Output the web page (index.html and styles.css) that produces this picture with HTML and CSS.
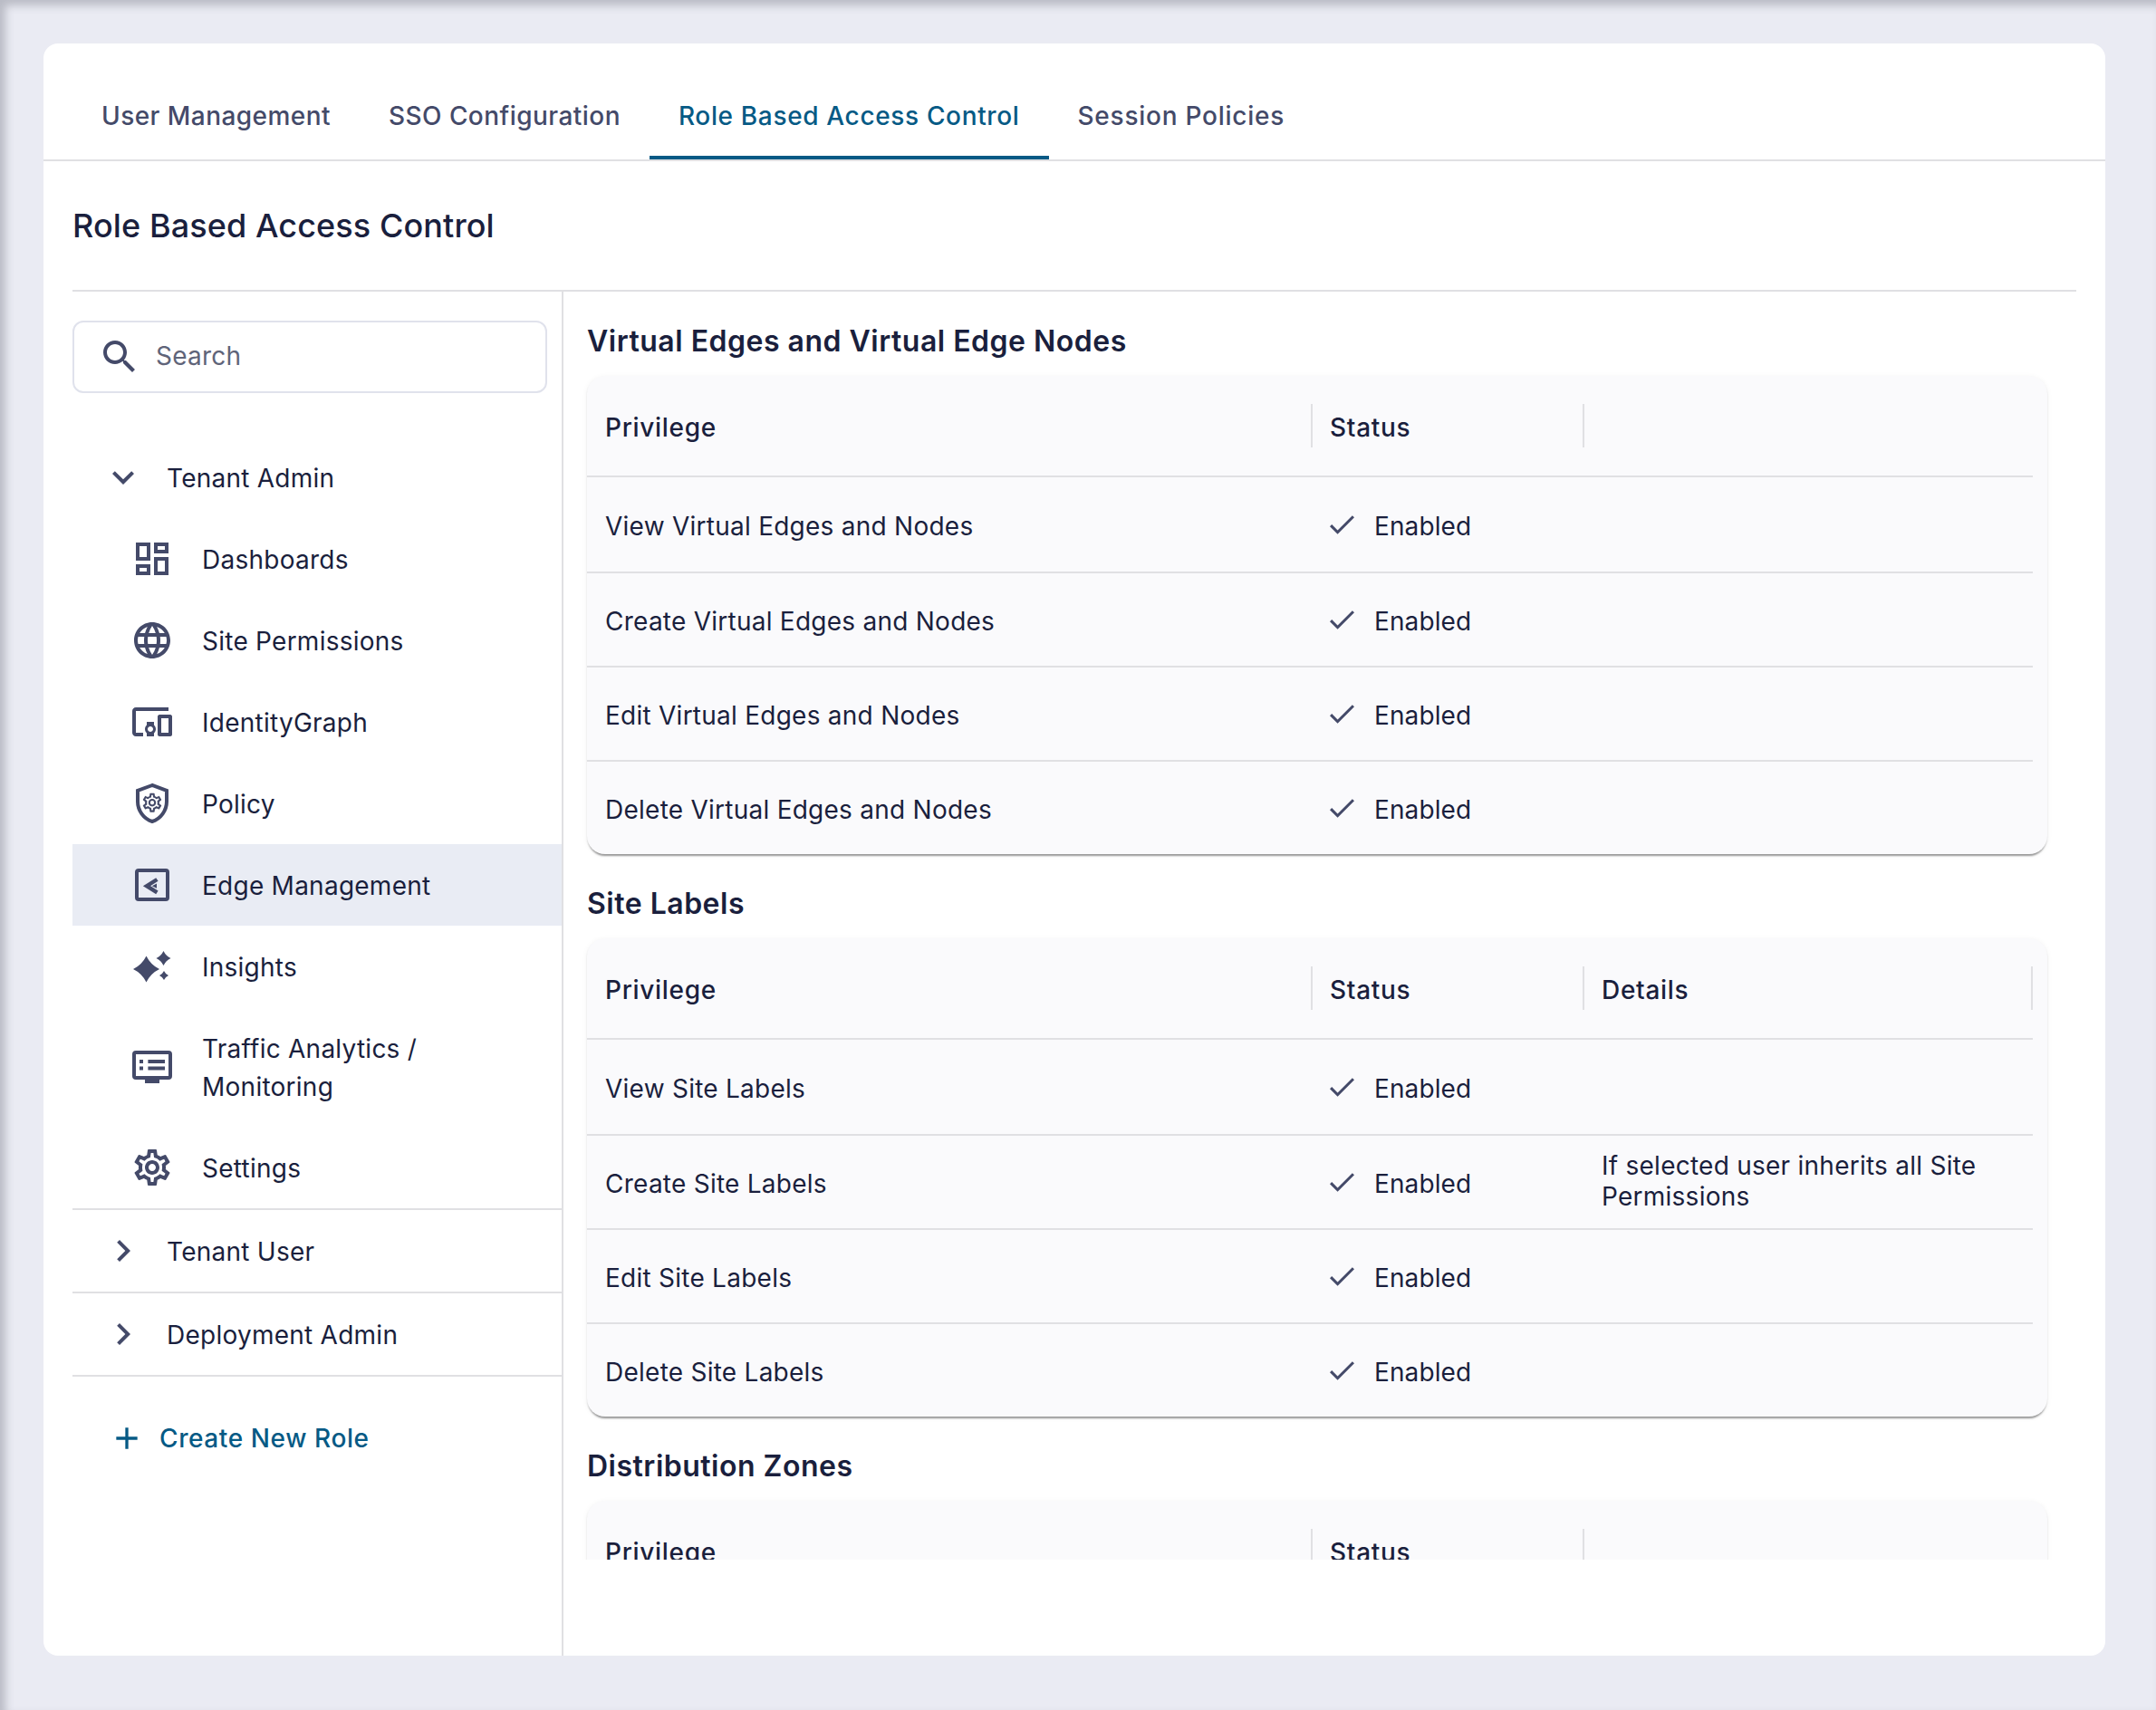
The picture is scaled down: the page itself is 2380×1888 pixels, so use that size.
FILE: index.html
```html
<!doctype html>
<html lang="en">
  <head>
    <meta charset="UTF-8" />
    <meta name="viewport" content="width=device-width, initial-scale=1.0" />
    <title>Role Based Access Control</title>
    <link rel="stylesheet" href="styles.css">
  </head>
  <body>
    <svg class="icon_defs" width="0" height="0">
      <defs>
        <path id="gear" d="M19.43 12.98c.04-.32.07-.64.07-.98 0-.34-.03-.66-.07-.98l2.11-1.65c.19-.15.24-.42.12-.64l-2-3.46c-.09-.16-.26-.25-.44-.25-.06 0-.12.01-.17.03l-2.49 1c-.52-.4-1.08-.73-1.69-.98l-.38-2.65C14.46 2.18 14.25 2 14 2h-4c-.25 0-.46.18-.49.42l-.38 2.65c-.61.25-1.17.59-1.69.98l-2.49-1c-.06-.02-.12-.03-.18-.03-.17 0-.34.09-.43.25l-2 3.46c-.13.22-.07.49.12.64l2.11 1.65c-.04.32-.07.65-.07.98 0 .33.03.66.07.98l-2.11 1.65c-.19.15-.24.42-.12.64l2 3.46c.09.16.26.25.44.25.06 0 .12-.01.17-.03l2.49-1c.52.4 1.08.73 1.69.98l.38 2.65c.03.24.24.42.49.42h4c.25 0 .46-.18.49-.42l.38-2.65c.61-.25 1.17-.59 1.69-.98l2.49 1c.06.02.12.03.18.03.17 0 .34-.09.43-.25l2-3.46c.12-.22.07-.49-.12-.64l-2.11-1.65zm-1.98-1.71c.04.31.05.52.05.73 0 .21-.02.43-.05.73l-.14 1.13.89.7 1.08.84-.7 1.21-1.27-.51-1.04-.42-.9.68c-.43.32-.84.56-1.25.73l-1.06.43-.16 1.13-.2 1.35h-1.4l-.19-1.35-.16-1.13-1.06-.43c-.43-.18-.83-.41-1.23-.71l-.91-.7-1.06.43-1.27.51-.7-1.21 1.08-.84.89-.7-.14-1.13c-.03-.31-.05-.54-.05-.74s.02-.43.05-.73l.14-1.13-.89-.7-1.08-.84.7-1.21 1.27.51 1.04.42.9-.68c.43-.32.84-.56 1.25-.73l1.06-.43.16-1.13.2-1.35h1.39l.19 1.35.16 1.13 1.06.43c.43.18.83.41 1.23.71l.91.7 1.06-.43 1.27-.51.7 1.21-1.07.85-.89.7.14 1.13zM12 8c-2.21 0-4 1.79-4 4s1.79 4 4 4 4-1.79 4-4-1.79-4-4-4zm0 6c-1.1 0-2-.9-2-2s.9-2 2-2 2 .9 2 2-.9 2-2 2z" />
        <path id="check" d="M9 16.17 4.83 12l-1.42 1.41L9 19 21 7l-1.41-1.41z" />
        <path id="chevron_right" d="M10 6 8.59 7.41 13.17 12l-4.58 4.59L10 18l6-6z" />
      </defs>
    </svg>

    <div class="card">
      <!-- tabs -->
      <div class="tabs_row">
        <div class="tab_item">User Management</div>
        <div class="tab_item">SSO Configuration</div>
        <div class="tab_item tab_active">Role Based Access Control</div>
        <div class="tab_item">Session Policies</div>
      </div>

      <div class="card_body">
        <h1 class="page_title">Role Based Access Control</h1>

        <div class="split_row">
          <!-- left tree -->
          <aside class="side_panel">
            <div class="search_box">
              <svg class="icon_48" viewBox="0 0 24 24"><path d="M15.5 14h-.79l-.28-.27C15.41 12.59 16 11.11 16 9.5 16 5.91 13.09 3 9.5 3S3 5.91 3 9.5 5.91 16 9.5 16c1.61 0 3.09-.59 4.23-1.57l.27.28v.79l5 4.99L20.49 19l-4.99-5zm-6 0C7.01 14 5 11.99 5 9.5S7.01 5 9.5 5 14 7.01 14 9.5 11.99 14 9.5 14z" /></svg>
              <span>Search</span>
            </div>

            <div class="tree_group">
              <div class="group_head">
                <svg class="icon_48" viewBox="0 0 24 24"><path d="M16.59 8.59 12 13.17 7.41 8.59 6 10l6 6 6-6z" /></svg>
                <span>Tenant Admin</span>
              </div>
              <div class="tree_item">
                <svg class="icon_48" viewBox="0 0 24 24"><path d="M19 5v2h-4V5h4M9 5v6H5V5h4m10 8v6h-4v-6h4M9 17v2H5v-2h4M21 3h-8v6h8V3zM11 3H3v10h8V3zm10 8h-8v10h8V11zm-10 4H3v6h8v-6z" /></svg>
                <span>Dashboards</span>
              </div>
              <div class="tree_item">
                <svg class="icon_48" viewBox="0 0 24 24"><path d="M11.99 2C6.47 2 2 6.48 2 12s4.47 10 9.99 10C17.52 22 22 17.52 22 12S17.52 2 11.99 2zm6.93 6h-2.95c-.32-1.25-.78-2.45-1.38-3.56 1.84.63 3.37 1.91 4.33 3.56zM12 4.04c.83 1.2 1.48 2.53 1.91 3.96h-3.82c.43-1.43 1.08-2.76 1.91-3.96zM4.26 14C4.1 13.36 4 12.69 4 12s.1-1.36.26-2h3.38c-.08.66-.14 1.32-.14 2 0 .68.06 1.34.14 2H4.26zm.82 2h2.95c.32 1.25.78 2.45 1.38 3.56-1.84-.63-3.37-1.9-4.33-3.56zm2.95-8H5.08c.96-1.66 2.49-2.93 4.33-3.56C8.81 5.55 8.35 6.75 8.03 8zM12 19.96c-.83-1.2-1.48-2.53-1.91-3.96h3.82c-.43 1.43-1.08 2.76-1.91 3.96zM14.34 14H9.66c-.09-.66-.16-1.32-.16-2 0-.68.07-1.35.16-2h4.68c.09.65.16 1.32.16 2 0 .68-.07 1.34-.16 2zm.25 5.56c.6-1.11 1.06-2.31 1.38-3.56h2.95c-.96 1.65-2.49 2.93-4.33 3.56zM16.36 14c.08-.66.14-1.32.14-2 0-.68-.06-1.34-.14-2h3.38c.16.64.26 1.31.26 2s-.1 1.36-.26 2h-3.38z" /></svg>
                <span>Site Permissions</span>
              </div>
              <div class="tree_item">
                <svg class="icon_48" viewBox="0 0 24 24"><path d="M3 6h18V4H3c-1.1 0-2 .9-2 2v12c0 1.1.9 2 2 2h4v-2H3V6zm10 6H9v1.78c-.61.55-1 1.33-1 2.22s.39 1.67 1 2.22V20h4v-1.78c.61-.55 1-1.34 1-2.22s-.39-1.67-1-2.22V12zm-2 5.5c-.83 0-1.5-.67-1.5-1.5s.67-1.5 1.5-1.5 1.5.67 1.5 1.5-.67 1.5-1.5 1.5zM22 8h-6c-.5 0-1 .5-1 1v10c0 .5.5 1 1 1h6c.5 0 1-.5 1-1V9c0-.5-.5-1-1-1zm-1 10h-4v-8h4v8z" /></svg>
                <span>IdentityGraph</span>
              </div>
              <div class="tree_item">
                <svg class="icon_48" viewBox="0 0 24 24">
                  <path class="icon_line" d="M12 2 4 5v6c0 4.9 3.3 9.6 8 11 4.700-1.400 8-6.100 8-11V5z" />
                  <use href="#gear" transform="translate(5.700 5.300) scale(.525)" />
                </svg>
                <span>Policy</span>
              </div>
              <div class="tree_item tree_item_active">
                <svg class="icon_48" viewBox="0 0 24 24">
                  <rect class="icon_line" x="3.500" y="4" width="17" height="16" rx="1" />
                  <path class="icon_line icon_thick" d="M14.700 9 9 12.600l5.700 3.600" />
                  <path d="M14.500 11.300v2.600l-2.600-1.300z" />
                </svg>
                <span>Edge Management</span>
              </div>
              <div class="tree_item">
                <svg class="icon_48" viewBox="0 0 24 24">
                  <path d="M8.750 6.250q2.400 4.900 7.250 7.250-4.850 2.350-7.250 7.250-2.400-4.900-7.250-7.250 4.850-2.350 7.250-7.250z" />
                  <path d="M18.250 3.500q1.300 2.700 4 4-2.700 1.300-4 4-1.300-2.700-4-4 2.700-1.300 4-4z" />
                  <path d="M18.500 14.500q.8 1.700 2.500 2.500-1.700.8-2.500 2.500-.8-1.700-2.500-2.500 1.700-.8 2.500-2.500z" />
                </svg>
                <span>Insights</span>
              </div>
              <div class="tree_item tree_item_tall">
                <svg class="icon_48" viewBox="0 0 24 24">
                  <rect class="icon_line" x="2" y="4" width="20" height="14" rx="1" />
                  <path d="M8 19h8v2H8zM5 8h2v2H5zM9.700 8H19v2H9.700zM5 11.800h2v2H5zM9.700 11.800H19v2H9.700z" />
                </svg>
                <span>Traffic Analytics /<br />Monitoring</span>
              </div>
              <div class="tree_item">
                <svg class="icon_48" viewBox="0 0 24 24"><use href="#gear" /></svg>
                <span>Settings</span>
              </div>
            </div>

            <div class="group_head group_closed">
              <svg class="icon_48" viewBox="0 0 24 24"><use href="#chevron_right" /></svg>
              <span>Tenant User</span>
            </div>
            <div class="group_head group_closed">
              <svg class="icon_48" viewBox="0 0 24 24"><use href="#chevron_right" /></svg>
              <span>Deployment Admin</span>
            </div>

            <div class="create_role">
              <svg class="icon_40" viewBox="0 0 24 24"><path d="M19 13h-6v6h-2v-6H5v-2h6V5h2v6h6v2z" /></svg>
              <span>Create New Role</span>
            </div>
          </aside>

          <!-- privileges, cut off by the scroll area -->
          <main class="main_panel">
            <div class="scroll_area">
              <h2 class="section_title">Virtual Edges and Virtual Edge Nodes</h2>
              <div class="table_paper">
                <table class="priv_table">
                  <thead>
                    <tr><th><span class="th_cell">Privilege</span></th><th><span class="th_cell">Status</span></th><th><span class="th_cell th_plain"></span></th></tr>
                  </thead>
                  <tbody>
                    <tr><td>View Virtual Edges and Nodes</td><td><span class="status_cell"><svg class="check_icon" viewBox="3.410 5.590 17.590 13.410"><use href="#check" /></svg>Enabled</span></td><td></td></tr>
                    <tr><td>Create Virtual Edges and Nodes</td><td><span class="status_cell"><svg class="check_icon" viewBox="3.410 5.590 17.590 13.410"><use href="#check" /></svg>Enabled</span></td><td></td></tr>
                    <tr><td>Edit Virtual Edges and Nodes</td><td><span class="status_cell"><svg class="check_icon" viewBox="3.410 5.590 17.590 13.410"><use href="#check" /></svg>Enabled</span></td><td></td></tr>
                    <tr><td>Delete Virtual Edges and Nodes</td><td><span class="status_cell"><svg class="check_icon" viewBox="3.410 5.590 17.590 13.410"><use href="#check" /></svg>Enabled</span></td><td></td></tr>
                  </tbody>
                </table>
              </div>

              <h2 class="section_title">Site Labels</h2>
              <div class="table_paper">
                <table class="priv_table">
                  <thead>
                    <tr><th><span class="th_cell">Privilege</span></th><th><span class="th_cell">Status</span></th><th><span class="th_cell th_last">Details</span></th></tr>
                  </thead>
                  <tbody>
                    <tr><td>View Site Labels</td><td><span class="status_cell"><svg class="check_icon" viewBox="3.410 5.590 17.590 13.410"><use href="#check" /></svg>Enabled</span></td><td></td></tr>
                    <tr><td>Create Site Labels</td><td><span class="status_cell"><svg class="check_icon" viewBox="3.410 5.590 17.590 13.410"><use href="#check" /></svg>Enabled</span></td><td class="details_cell">If selected user inherits all Site Permissions</td></tr>
                    <tr><td>Edit Site Labels</td><td><span class="status_cell"><svg class="check_icon" viewBox="3.410 5.590 17.590 13.410"><use href="#check" /></svg>Enabled</span></td><td></td></tr>
                    <tr><td>Delete Site Labels</td><td><span class="status_cell"><svg class="check_icon" viewBox="3.410 5.590 17.590 13.410"><use href="#check" /></svg>Enabled</span></td><td></td></tr>
                  </tbody>
                </table>
              </div>

              <h2 class="section_title">Distribution Zones</h2>
              <div class="table_paper">
                <table class="priv_table">
                  <thead>
                    <tr><th><span class="th_cell">Privilege</span></th><th><span class="th_cell">Status</span></th><th><span class="th_cell th_plain"></span></th></tr>
                  </thead>
                </table>
              </div>
            </div>
          </main>
        </div>
      </div>
    </div>
  </body>
</html>
```

FILE: styles.css
```css
:root {
  --text-dark: #1a1f3d;
  --text-muted: #444a69;
  --blue: #065a85;
  --line: #e0e0e3;
}

html,
body {
  margin: 0;
  height: 100%;
}
body {
  height: 1888px;
  box-sizing: border-box;
  padding: 48px 56px 60px 48px;
  overflow: hidden;
  background-color: #eaebf3;
  box-shadow: inset 6px 6px 10px rgba(60, 64, 80, 0.28);
  font-family: "Inter", sans-serif;
  font-size: 28px;
  letter-spacing: 0.25px;
  color: var(--text-dark);
}

.icon_defs {
  position: absolute;
}
svg {
  fill: var(--text-muted);
  flex: none;
}
.icon_48 {
  width: 48px;
  height: 48px;
}
.icon_40 {
  width: 40px;
  height: 40px;
  fill: var(--blue);
}
.icon_line {
  fill: none;
  stroke: var(--text-muted);
  stroke-width: 2;
}
.icon_thick {
  stroke-width: 2.2;
}

.card {
  height: 100%;
  display: flex;
  flex-direction: column;
  background-color: #fff;
  border-radius: 16px;
  overflow: hidden;
}

/* TABS */
.tabs_row {
  display: flex;
  height: 130px;
  box-sizing: border-box;
  padding-left: 32px;
  border-bottom: 2px solid var(--line);
  flex: none;
}
.tab_item {
  padding: 63px 32px 0;
  height: 124px;
  box-sizing: border-box;
  color: var(--text-muted);
  font-weight: 500;
  letter-spacing: 0.45px;
}
.tab_item:last-child {
  letter-spacing: 0.75px;
}
.tab_active {
  height: 128px;
  color: var(--blue);
  letter-spacing: 0.65px;
  border-bottom: 4px solid var(--blue);
}

.card_body {
  flex: 1;
  min-height: 0;
  display: flex;
  flex-direction: column;
  padding: 0 32px;
}
.page_title {
  margin: 0;
  height: 142px;
  line-height: 142px;
  flex: none;
  border-bottom: 2px solid var(--line);
  box-sizing: content-box;
  font-size: 36px;
  font-weight: 500;
  letter-spacing: 0.1px;
}

.split_row {
  flex: 1;
  min-height: 0;
  display: flex;
}

/* LEFT TREE */
.side_panel {
  width: 542px;
  box-sizing: border-box;
  border-right: 2px solid var(--line);
  flex: none;
}
.search_box {
  display: flex;
  align-items: center;
  gap: 16px;
  width: 524px;
  height: 80px;
  margin-top: 32px;
  padding-left: 26px;
  box-sizing: border-box;
  border: 2px solid #e0e2ec;
  border-radius: 12px;
  color: #5f6479;
}
.search_box span {
  padding-bottom: 3px;
}
.tree_group {
  margin-top: 48px;
  border-bottom: 2px solid var(--line);
}
.group_head {
  display: flex;
  align-items: center;
  gap: 24px;
  height: 90px;
  padding-left: 32px;
}
.group_head span,
.tree_item span {
  padding-top: 2px;
  letter-spacing: 0.25px;
}
.group_closed {
  height: 90px;
  border-bottom: 2px solid var(--line);
}
.tree_item {
  display: flex;
  align-items: center;
  gap: 31px;
  height: 90px;
  padding-left: 64px;
  line-height: 42px;
}
.tree_item_tall {
  height: 132px;
}
.tree_item_active {
  background-color: #e9ecf4;
}
.create_role {
  display: flex;
  align-items: center;
  gap: 16px;
  margin-top: 48px;
  padding-left: 40px;
  color: var(--blue);
  font-weight: 500;
  letter-spacing: 0.6px;
}

/* PRIVILEGES */
.main_panel {
  flex: 1;
  min-width: 0;
}
.scroll_area {
  height: 1400px;
  overflow: hidden;
  padding-left: 26px;
  padding-right: 32px;
}
.section_title {
  margin: 0;
  height: 93px;
  line-height: 70px;
  padding-top: 20px;
  box-sizing: border-box;
  font-size: 32px;
  font-weight: 600;
  letter-spacing: 0.5px;
}
.table_paper {
  padding-right: 16px;
  background-color: #fafafc;
  border-radius: 20px;
  box-shadow: 0 4px 2px -2px rgba(0, 0, 0, 0.3), 0 2px 2px rgba(0, 0, 0, 0.12), 0 1px 6px rgba(0, 0, 0, 0.05);
}
.priv_table {
  width: 1596px;
  table-layout: fixed;
  border-collapse: collapse;
}
.priv_table th:nth-child(1),
.priv_table td:nth-child(1) {
  width: 800px;
}
.priv_table th:nth-child(2),
.priv_table td:nth-child(2) {
  width: 300px;
}
.priv_table th {
  height: 110px;
  padding: 0;
  text-align: left;
  font-weight: 500;
  letter-spacing: 0.7px;
  border-bottom: 2px solid var(--line);
}
.priv_table thead:last-child th {
  border-bottom: 0;
}
.th_cell {
  display: block;
  height: 48px;
  line-height: 52px;
  margin-right: -1px;
  padding-left: 20px;
  box-sizing: border-box;
  border-right: 2px solid var(--line);
}
.th_cell.th_last {
  margin-right: 0;
}
.th_cell.th_plain {
  border-right: 0;
}
.priv_table td {
  padding: 3px 20px 0;
  box-sizing: content-box;
  height: 99px;
  line-height: 34px;
  border-bottom: 2px solid var(--line);
}
.priv_table tbody tr:first-child td {
  height: 101px;
}
.priv_table tr:last-child td {
  border-bottom: 0;
}
.priv_table td.details_cell {
  padding-top: 0;
  padding-bottom: 3px;
}
.status_cell {
  display: flex;
  align-items: center;
  gap: 22px;
  letter-spacing: 0.1px;
}
.check_icon {
  width: 27px;
  height: 21px;
  margin-top: -2px;
}
```
